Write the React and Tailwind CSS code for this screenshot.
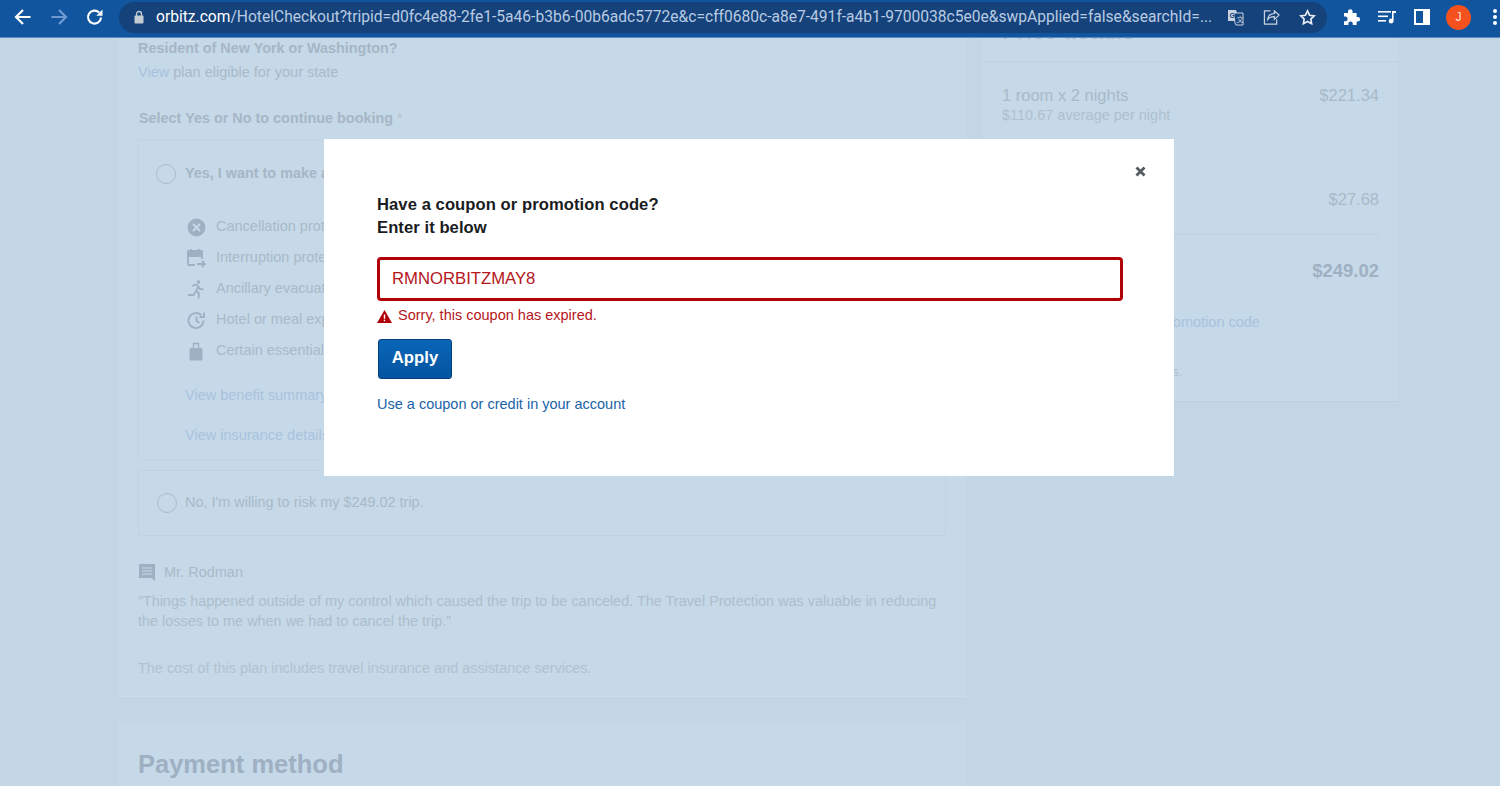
import React from "react";

function Benefit({ icon, children }) {
  return (
    <div className="flex h-[31px] items-center">
      <span className="flex w-[20px] justify-center text-[#9fb0c3]">{icon}</span>
      <span className="ml-[10px] whitespace-nowrap text-[14.5px] text-[#a9bac9]">{children}</span>
    </div>
  );
}

function PriceRow({ label, sub, price }) {
  return (
    <div className="flex justify-between">
      <div>
        <div className="text-[16.5px] leading-[20px] text-[#a9bac9]">{label}</div>
        {sub && <div className="text-[14.5px] leading-[20px] text-[#b0c0cf]">{sub}</div>}
      </div>
      <div className="text-[16.5px] leading-[20px] text-[#a9bac9]">{price}</div>
    </div>
  );
}

export default function App() {
  return (
    <div className="relative flex h-[786px] w-[1500px] flex-col overflow-hidden bg-[#c3d6e5] font-['Liberation_Sans',Arial,sans-serif]">
      {/* Browser toolbar */}
      <header className="flex h-[38px] shrink-0 items-center border-b border-b-[#5b8ac2] bg-[#11559f] pb-[3px] pl-[13px]">
        <svg width="20" height="20" viewBox="0 0 20 20" fill="none" stroke="#fff" strokeWidth="2.2">
          <path d="M17.5 10H3.5M10 3 3 10l7 7" />
        </svg>
        <svg width="20" height="20" viewBox="0 0 20 20" fill="none" stroke="#6f9ad0" strokeWidth="2.2" className="ml-[16px]">
          <path d="M2.5 10h14M10 3l7 7-7 7" />
        </svg>
        <svg width="20" height="20" viewBox="0 0 20 20" fill="none" className="ml-[16px]">
          <path d="M16 10.5a6.5 6.5 0 1 1-1.9-5" stroke="#fff" strokeWidth="2.2" />
          <path d="M17.5 2.5v6.2h-6.2z" fill="#fff" />
        </svg>
        <div className="ml-[14px] flex h-[31px] w-[1208px] items-center rounded-full bg-[#15427a] pl-[15px]">
          <svg width="10" height="14" viewBox="0 0 10 14">
            <path d="M2.5 6V4a2.5 2.5 0 0 1 5 0v2" fill="none" stroke="#c4ccd6" strokeWidth="1.3" />
            <rect x="0.5" y="5.5" width="9" height="8" rx="1" fill="#c4ccd6" />
          </svg>
          <div className="ml-[12px] w-[1064px] whitespace-nowrap font-['Roboto',sans-serif] text-[15.6px] leading-[20px] text-[#b9cbe3]">
            <span className="text-white">orbitz.com</span>/HotelCheckout?tripid=d0fc4e88-2fe1-5a46-b3b6-00b6adc5772e&amp;c=cff0680c-a8e7-491f-a4b1-9700038c5e0e&amp;swpApplied=false&amp;searchId=...
          </div>
          <svg width="17" height="17" viewBox="0 0 17 17" className="ml-[7px]">
            <path d="M1 1h8l1 3v8H1z" fill="#c9d3df" />
            <path d="M7 4h9v12H9l-1-2z" fill="#15427a" stroke="#c9d3df" />
            <text x="2.5" y="9" fontSize="7" fontWeight="700" fill="#15427a" fontFamily="Liberation Sans">G</text>
            <text x="9.5" y="12.5" fontSize="7" fill="#c9d3df" fontFamily="Noto Sans CJK SC">文</text>
          </svg>
          <svg width="17" height="16" viewBox="0 0 18 17" fill="none" stroke="#c9d3df" strokeWidth="1.3" className="ml-[19px]">
            <path d="M8 2H1.5v14h13v-5" />
            <path d="M5 11c.5-4 3.5-6 7-6V2l5 4.5L12 11V8c-3 0-5.500 1-7 3z" />
          </svg>
          <svg width="17" height="17" viewBox="0 0 24 24" fill="none" stroke="#e8edf3" strokeWidth="2.4" className="ml-[19px]">
            <path d="m12 2.800 2.900 6 6.500.900-4.700 4.500 1.100 6.500L12 17.600l-5.800 3.100 1.100-6.500L2.600 9.700l6.500-.9z" />
          </svg>
        </div>
        <svg width="18" height="18" viewBox="0 0 18 18" fill="#fff" className="ml-[16px]">
          <path d="M1 5h4V3.500a2.300 2.300 0 0 1 4.600 0V5h4v4h1.200a2.300 2.300 0 0 1 0 4.600h-1.200V17H9.800v-1.400a2.200 2.200 0 0 0-4.400 0V17H1v-3.800h1.300a2.300 2.300 0 0 0 0-4.600H1z" />
        </svg>
        <svg width="18" height="14" viewBox="0 0 18 14" fill="#fff" className="ml-[17px]">
          <rect x="0" y="1" width="13" height="1.600" />
          <rect x="0" y="5.500" width="10" height="1.600" />
          <rect x="0" y="10" width="8" height="1.600" />
          <path d="M14 1h4v2h-2.400v8a2.400 2.400 0 1 1-1.600-2.300z" />
        </svg>
        <svg width="16" height="16" viewBox="0 0 16 16" className="ml-[18px]">
          <rect x="1" y="1" width="14" height="14" fill="none" stroke="#fff" strokeWidth="2" />
          <rect x="9" y="1" width="6" height="14" fill="#fff" />
        </svg>
        <div className="ml-[16px] flex h-[25px] w-[25px] items-center justify-center rounded-full bg-[#f4511e] text-[12px] text-[#fbe0d5]">J</div>
        <div className="ml-[22px] flex flex-col gap-[2px]">
          <span className="h-[4px] w-[4px] rounded-full bg-white" />
          <span className="h-[4px] w-[4px] rounded-full bg-white" />
          <span className="h-[4px] w-[4px] rounded-full bg-white" />
        </div>
      </header>

      {/* Dimmed page */}
      <main className="flex min-h-0 flex-1 gap-[16px] overflow-hidden pl-[118px]">
        <div className="flex w-[848px] shrink-0 flex-col gap-[24px]">
          <section className="h-[659px] shrink-0 border-b border-b-[#c9dcea] bg-[#c5d9e8] px-[20px] pt-[1px]">
            <div className="text-[14.4px] font-bold leading-[18px] text-[#a7b6c6]">Resident of New York or Washington?</div>
            <div className="mt-[6px] text-[14.5px] leading-[18px] text-[#a9bac9]">
              <span className="text-[#a9c2de]">View</span> plan eligible for your state
            </div>
            <div className="mt-[28px] pl-[1px] text-[14.4px] font-bold leading-[18px] text-[#a7b6c6]">
              Select Yes or No to continue booking <span className="font-normal text-[#b4c3d1]">*</span>
            </div>

            <div className="mt-[12px] h-[321px] border border-[#c0d3e2] pl-[17px] pt-[23px]">
              <div className="flex items-center">
                <span className="h-[20px] w-[20px] rounded-full border border-[#aabccc]" />
                <span className="ml-[9px] whitespace-nowrap text-[14.4px] font-bold text-[#a7b6c6]">Yes, I want to make a</span>
              </div>
              <div className="ml-[30px] mt-[27px]">
                <Benefit icon={<svg width="19" height="19" viewBox="0 0 19 19"><circle cx="9.500" cy="9.500" r="9" fill="#9fb0c3" /><path d="m6 6 7 7m0-7-7 7" stroke="#c5d9e8" strokeWidth="2" /></svg>}>Cancellation protection</Benefit>
                <Benefit icon={<svg width="20" height="20" viewBox="0 0 20 20" fill="none" stroke="#9fb0c3" strokeWidth="1.800"><path d="M2 17V4h14v7M2 17h7" /><path d="M2 3h14v5H2z" fill="#9fb0c3" /><path d="M5 1v3m8-3v3M11 16h8m-3-3 3 3-3 3" /></svg>}>Interruption protection</Benefit>
                <Benefit icon={<svg width="20" height="20" viewBox="0 0 20 20" fill="none" stroke="#9fb0c3" strokeWidth="1.800"><circle cx="12.500" cy="3" r="1.800" fill="#9fb0c3" stroke="none" /><path d="m6 7 4-1.500 2.500 2L10 12l3 2.500-.5 5M12 8l2 2 3.500.5M9.500 13l-2 3H2" /></svg>}>Ancillary evacuation</Benefit>
                <Benefit icon={<svg width="19" height="19" viewBox="0 0 19 19" fill="none" stroke="#9fb0c3" strokeWidth="1.800"><path d="M16.500 9.500a7.500 7.500 0 1 1-2.200-5.300" /><path d="M17 1.500V6h-4.500" /><path d="M9.500 5.500v4.500l3 2" /></svg>}>Hotel or meal expenses</Benefit>
                <Benefit icon={<svg width="14" height="19" viewBox="0 0 14 19"><path d="M4.500 6V1.500h5V6" fill="none" stroke="#9fb0c3" strokeWidth="1.400" /><rect x="0.500" y="6" width="13" height="12.500" rx="1.500" fill="#9fb0c3" /></svg>}>Certain essential items</Benefit>
              </div>
              <div className="ml-[29px] mt-[18px] whitespace-nowrap text-[14.5px] text-[#a9c2de]">View benefit summary</div>
              <div className="ml-[29px] mt-[19px] whitespace-nowrap text-[14.5px] text-[#a9c2de]">View insurance details</div>
            </div>

            <div className="mt-[10px] flex h-[66px] items-center border border-[#c0d3e2] pl-[18px]">
              <span className="h-[20px] w-[20px] rounded-full border border-[#aabccc]" />
              <span className="ml-[8px] text-[14.45px] text-[#a9bac9]">No, I'm willing to risk my $249.02 trip.</span>
            </div>

            <div className="mt-[26px] flex items-center">
              <svg width="18" height="18" viewBox="0 0 18 18" className="mt-[1px]">
                <path d="M1 1h16v17l-3.500-3H1z" fill="#9fb0c3" />
                <path d="M4 5h10M4 8h10M4 11h10" stroke="#c5d9e8" strokeWidth="1.200" />
              </svg>
              <span className="ml-[8px] text-[14.5px] leading-[18px] text-[#a9bac9]">Mr. Rodman</span>
            </div>
            <p className="mt-[10px] text-[14.45px] leading-[20px] text-[#aebecd]">
              “Things happened outside of my control which caused the trip to be canceled. The Travel Protection was valuable in reducing the losses to me when we had to cancel the trip.”
            </p>
            <p className="mt-[27px] text-[14.45px] leading-[20px] text-[#b2c2d1]">
              The cost of this plan includes travel insurance and assistance services.
            </p>
          </section>

          <section className="flex-1 bg-[#c5d9e8] px-[20px] pt-[27px]">
            <h2 className="text-[25.5px] font-bold leading-[32px] text-[#9fb0c3]">Payment method</h2>
          </section>
        </div>

        <aside className="h-[364px] w-[416px] shrink-0 border-b border-b-[#bdd0e0] bg-[#c5d9e8] pl-[20px] pr-[19px]">
          <div className="mt-[-18px] h-[41px] text-[22.5px] font-bold leading-[24px] text-[#a9bac9]">Price details</div>
          <div className="ml-[-20px] mr-[-19px] border-t border-t-[#bdd0e0]" />
          <div className="pt-[23px]">
            <PriceRow label="1 room x 2 nights" sub="$110.67 average per night" price="$221.34" />
          </div>
          <div className="mt-[64px]">
            <PriceRow label="Taxes and fees" price="$27.68" />
          </div>
          <div className="mt-[25px] border-t border-t-[#bdd0e0]" />
          <div className="mt-[26px] flex justify-between text-[18.5px] font-bold leading-[20px] text-[#9fb0c3]">
            <span>Total</span>
            <span>$249.02</span>
          </div>
          <div className="mt-[31px] text-[14.5px] leading-[20px] text-[#a9c2de]">Use a coupon, credit, or promotion code</div>
          <div className="mt-[30px] text-[13px] leading-[20px] text-[#aebecd]">Rates are quoted in US dollars.</div>
        </aside>
      </main>

      {/* Coupon dialog */}
      <div role="dialog" className="absolute left-[324px] top-[139px] h-[337px] w-[850px] bg-white pl-[53px] pr-[52px] pt-[54px]">
        <button className="absolute right-[27px] top-[26px] flex h-[13px] w-[13px] items-center justify-center" aria-label="Close">
          <svg width="11" height="11" viewBox="0 0 11 11"><path d="m1.500 1.500 8 8m0-8-8 8" stroke="#555b63" strokeWidth="2.800" /></svg>
        </button>
        <h2 className="text-[16.6px] font-bold leading-[23px] tracking-[0.07px] text-[#1a1c1f]">
          Have a coupon or promotion code?<br />Enter it below
        </h2>
        <div className="mt-[18px] flex h-[44px] w-[746px] items-center rounded-[4px] border-[3px] border-[#b00008] pl-[12px] text-[16.7px] text-[#b4161c]">
          RMNORBITZMAY8
        </div>
        <div className="mt-[6px] flex h-[18px] items-center">
          <svg width="15" height="13" viewBox="0 0 15 13">
            <path d="M7.500 0 15 13H0z" fill="#b00008" />
            <path d="M7.500 4.500v4.200M7.500 9.800v1.400" stroke="#fff" strokeWidth="1.400" />
          </svg>
          <span className="ml-[6px] text-[14.5px] text-[#b4161c]">Sorry, this coupon has expired.</span>
        </div>
        <button className="ml-[1px] mt-[14px] block h-[40px] w-[74px] rounded-[3px] border border-[#063e7c] bg-gradient-to-b from-[#0a66b8] to-[#04549f] pb-[2px] text-[16.7px] font-bold text-white">
          Apply
        </button>
        <div className="mt-[16px] text-[14.5px] leading-[18px] text-[#1a63a8]">Use a coupon or credit in your account</div>
      </div>
    </div>
  );
}
